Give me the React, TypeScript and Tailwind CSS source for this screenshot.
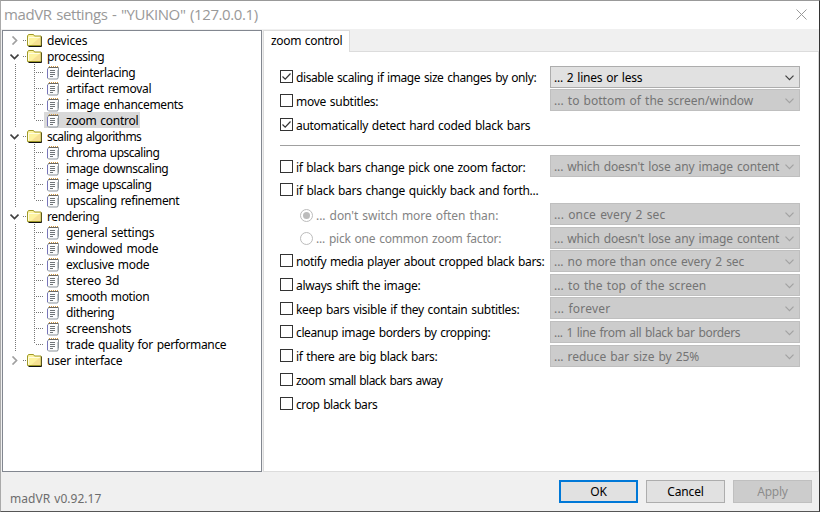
import { useLayoutEffect, useRef, useState } from "react";

const dotsV = "bg-[repeating-linear-gradient(to_bottom,#777_0px,#777_1px,transparent_1px,transparent_2px)]";
const dotsH = "bg-[repeating-linear-gradient(to_right,#777_0px,#777_1px,transparent_1px,transparent_2px)]";

/* Spreads its letters evenly so that the text fills the given width. */
function Label({ text, width, className = "" }: { text: string; width: number; className?: string }) {
  const ref = useRef<HTMLSpanElement>(null);
  const [spacing, setSpacing] = useState(0);
  useLayoutEffect(() => {
    const natural = ref.current!.getBoundingClientRect().width;
    setSpacing((width + 0.3 - natural) / text.length);
  }, [text, width]);
  return (
    <span ref={ref} style={{ letterSpacing: spacing }} className={`shrink-0 whitespace-pre [word-spacing:1px] ${className}`}>
      {text}
    </span>
  );
}

function Folder() {
  return (
    <svg width="16" height="14" viewBox="0 0 16 14" className="shrink-0">
      <path d="M1.500 13.500h13v-10" fill="none" stroke="#111" />
      <path d="M.5 12.500V3l1-1.500h5l1 1.500h6.500v9.500z" fill="#fdf3a0" stroke="#a09a28" />
      <path d="M1.500 4.500H13M1.500 4.500v7" fill="none" stroke="#fffde0" />
      <path d="M4 12l9.500-8v8z" fill="#f2d68c" opacity=".65" />
    </svg>
  );
}

function Note() {
  return (
    <svg width="12" height="15" viewBox="0 0 12 15" className="shrink-0">
      <path d="M2 2.500h9.500v9l-1 2.500H1.500L.5 13V4z" fill="#fbfcfd" stroke="#8b949b" />
      <path d="M.5 4v9" stroke="#7775b8" />
      <path d="M1.500 2.500h9" stroke="#443a2c" strokeDasharray="1 1" />
      <path d="M2 1.500h9" stroke="#d29a43" strokeDasharray="1 1" />
      <path d="M3 5.500h5M3 7.500h5M3 9.500h5M3 11.500h3" stroke="#6e7478" />
      <path d="M10.500 5v7" stroke="#c3c8cc" />
    </svg>
  );
}

type Group = { name: string; width: number; open: boolean; items: [string, number][] };

const groups: Group[] = [
  { name: "devices", width: 40, open: false, items: [] },
  {
    name: "processing", width: 57, open: true,
    items: [["deinterlacing", 69], ["artifact removal", 85], ["image enhancements", 117], ["zoom control", 72]],
  },
  {
    name: "scaling algorithms", width: 94, open: true,
    items: [["chroma upscaling", 93], ["image downscaling", 102], ["image upscaling", 85], ["upscaling refinement", 113]],
  },
  {
    name: "rendering", width: 52, open: true,
    items: [
      ["general settings", 88], ["windowed mode", 92], ["exclusive mode", 83], ["stereo 3d", 53],
      ["smooth motion", 83], ["dithering", 48], ["screenshots", 65], ["trade quality for performance", 160],
    ],
  },
  { name: "user interface", width: 75, open: false, items: [] },
];

function TreeGroup({ group }: { group: Group }) {
  return (
    <div>
      <div className="flex h-4 items-center">
        <svg width="9" height="9" viewBox="0 0 9 9" className="ml-[7px] shrink-0">
          <path
            d={group.open ? "M.5 2.500l4 4 4-4" : "M2.500.5l4 4-4 4"}
            fill="none" stroke={group.open ? "#404040" : "#a0a0a0"} strokeWidth="1.700"
          />
        </svg>
        <span className={`ml-[4px] h-px w-[3px] ${dotsH}`} />
        <span className="ml-px flex"><Folder /></span>
        <Label text={group.name} width={group.width} className="ml-[4px] pt-[2px]" />
      </div>
      {group.items.map(([name, width], i) => (
        <div key={name} className="flex h-4 items-center">
          <span className={`ml-[12px] h-4 w-px shrink-0 ${dotsV}`} />
          <span className={`ml-[18px] w-px shrink-0 self-start ${dotsV} ${i === group.items.length - 1 ? "h-2" : "h-4"}`} />
          <span className={`ml-px h-px w-[8px] shrink-0 ${dotsH}`} />
          <div className={`flex h-4 items-center pl-[3px] pr-[2px] ${name === "zoom control" ? "bg-[#d9d9d9]" : ""}`}>
            <Note />
            <Label text={name} width={width} className="ml-[7px] pt-[2px]" />
          </div>
        </div>
      ))}
    </div>
  );
}

type Option = { text: string; width: number; gap: string; kind?: "radio"; on?: boolean };

const topOptions: Option[] = [
  { text: "disable scaling if image size changes by only:", width: 240, gap: "mt-0", on: true },
  { text: "move subtitles:", width: 82, gap: "mt-[2px]" },
  { text: "automatically detect hard coded black bars", width: 234, gap: "mt-[2px]", on: true },
];

const lowerOptions: Option[] = [
  { text: "if black bars change pick one zoom factor:", width: 229, gap: "mt-0" },
  { text: "if black bars change quickly back and forth...", width: 242, gap: "mt-px" },
  { text: "... don't switch more often than:", width: 182, gap: "mt-[4px]", kind: "radio", on: true },
  { text: "... pick one common zoom factor:", width: 185, gap: "mt-px", kind: "radio" },
  { text: "notify media player about cropped black bars:", width: 248, gap: "mt-0" },
  { text: "always shift the image:", width: 124, gap: "mt-[2px]" },
  { text: "keep bars visible if they contain subtitles:", width: 223, gap: "mt-[2px]" },
  { text: "cleanup image borders by cropping:", width: 194, gap: "mt-px" },
  { text: "if there are big black bars:", width: 141, gap: "mt-[2px]" },
  { text: "zoom small black bars away", width: 146, gap: "mt-[2px]" },
  { text: "crop black bars", width: 81, gap: "mt-[2px]" },
];

function OptionRow({ option }: { option: Option }) {
  if (option.kind === "radio") {
    return (
      <div className={`flex h-[22px] items-start pl-5 pt-[4px] text-[#848484] ${option.gap}`}>
        <span className="flex size-[13px] shrink-0 items-center justify-center rounded-full border border-[#bcbcbc]">
          {option.on && <span className="size-[7px] rounded-full bg-[#bcbcbc]" />}
        </span>
        <Label text={option.text} width={option.width} className="ml-[3px] leading-[14px]" />
      </div>
    );
  }
  return (
    <div className={`flex h-[22px] items-start pt-[4px] ${option.gap}`}>
      <span className="flex size-[13px] shrink-0 items-center justify-center border border-[#333]">
        {option.on && (
          <svg width="11" height="11" viewBox="0 0 11 11">
            <path d="M1.500 5.500l2.700 2.700 5.300-5.700" fill="none" stroke="#333" strokeWidth="1.200" />
          </svg>
        )}
      </span>
      <Label text={option.text} width={option.width} className="ml-[3px] leading-[15px]" />
    </div>
  );
}

type Choice = { text: string; width: number; gap: string; enabled?: boolean };

const topChoices: Choice[] = [
  { text: "... 2 lines or less", width: 88, gap: "mt-0", enabled: true },
  { text: "... to bottom of the screen/window", width: 199, gap: "mt-px" },
];

const lowerChoices: Choice[] = [
  { text: "... which doesn't lose any image content", width: 225, gap: "-mt-px" },
  { text: "... once every 2 sec", width: 111, gap: "mt-[26px]" },
  { text: "... which doesn't lose any image content", width: 225, gap: "mt-[2px]" },
  { text: "... no more than once every 2 sec", width: 190, gap: "mt-px" },
  { text: "... to the top of the screen", width: 152, gap: "mt-[2px]" },
  { text: "... forever", width: 56, gap: "mt-px" },
  { text: "... 1 line from all black bar borders", width: 186, gap: "mt-[2px]" },
  { text: "... reduce bar size by 25%", width: 145, gap: "mt-[2px]" },
];

function Combo({ choice }: { choice: Choice }) {
  const look = choice.enabled ? "border-[#adadad] bg-[#e1e1e1] text-black" : "border-[#bfbfbf] bg-[#cccccc] text-[#747474]";
  return (
    <div className={`flex h-[22px] items-center justify-between border pl-[3px] pr-[5px] ${look} ${choice.gap}`}>
      <Label text={choice.text} width={choice.width} className="pt-[2px]" />
      <svg width="9" height="6" viewBox="0 0 9 6" className="mt-[2px] shrink-0">
        <path d="M.5.7l4 4 4-4" fill="none" stroke={choice.enabled ? "#404040" : "#a2a2a2"} strokeWidth="1.200" />
      </svg>
    </div>
  );
}

export default function App() {
  return (
    <div className="flex h-[512px] w-[820px] flex-col overflow-hidden border border-b-[#555] border-l-[#aaa] border-r-[#333] border-t-[#999] bg-[#f0f0f0] font-['Noto_Sans',sans-serif] text-[12px] leading-[16px] text-black">
      <header className="flex h-[28px] shrink-0 items-center justify-between bg-white pb-[2px] pl-[3px] pr-[12px] font-['Open_Sans',sans-serif] text-[15px] text-[#999]">
        <Label text={'madVR settings - "YUKINO" (127.0.0.1)'} width={253.500} />
        <svg width="11" height="11" viewBox="0 0 11 11">
          <path d="M.5.5l10 10M10.500.5l-10 10" stroke="#999" />
        </svg>
      </header>

      <main className="flex h-[443px] shrink-0 pl-px pt-px">
        <nav className="w-[260px] shrink-0 border border-[#828790] bg-white pt-px">
          {groups.map((group) => <TreeGroup key={group.name} group={group} />)}
        </nav>

        <section className="ml-px flex min-w-0 flex-1 flex-col">
          <div className="flex h-[21px] shrink-0">
            <div className="relative z-10 -mb-px h-[22px] w-[87px] border border-b-0 border-[#dcdcdc] bg-white pl-[7px] pt-[2px]">
              <Label text="zoom control" width={71} />
            </div>
          </div>
          <div className="flex-1 border border-[#dcdcdc] bg-white pl-[16px] pr-[17px] pt-[14px]">
            <div className="flex h-[79px]">
              <div className="w-[270px]">
                {topOptions.map((o) => <OptionRow key={o.text} option={o} />)}
              </div>
              <div className="w-[250px]">
                {topChoices.map((c) => <Combo key={c.text} choice={c} />)}
              </div>
            </div>
            <div className="h-px w-[520px] bg-[#a0a0a0]" />
            <div className="flex pt-[10px]">
              <div className="w-[270px]">
                {lowerOptions.map((o) => <OptionRow key={o.text} option={o} />)}
              </div>
              <div className="w-[250px]">
                {lowerChoices.map((c, i) => <Combo key={i} choice={c} />)}
              </div>
            </div>
          </div>
        </section>
      </main>

      <footer className="flex flex-1 items-start pl-[9px] pt-[8px]">
        <Label text="madVR v0.92.17" width={91} className="mt-[11px] text-[#6d6d6d]" />
        <div className="ml-auto mr-[7px] flex gap-[8px]">
          <button className="flex h-[23px] w-[79px] items-center justify-center border-2 border-[#0078d7] bg-[#e1e1e1]">
            <Label text="OK" width={16} />
          </button>
          <button className="flex h-[23px] w-[79px] items-center justify-center border border-[#adadad] bg-[#e1e1e1]">
            <Label text="Cancel" width={36} />
          </button>
          <button className="flex h-[23px] w-[79px] items-center justify-center border border-[#bfbfbf] bg-[#cccccc] text-[#8c8c8c]">
            <Label text="Apply" width={30} />
          </button>
        </div>
      </footer>
    </div>
  );
}
